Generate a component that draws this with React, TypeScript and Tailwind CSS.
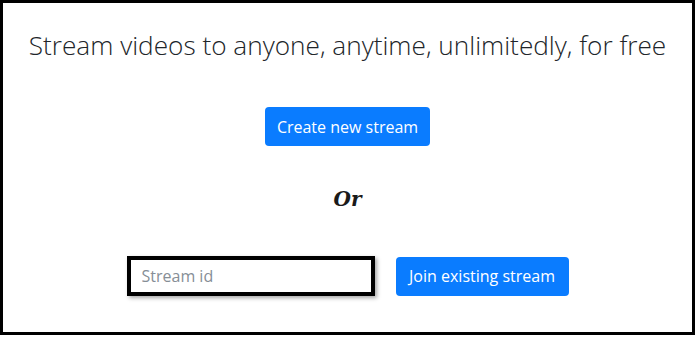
export default function App() {
  return (
    <div className="h-[337px] w-[696px] bg-white p-0">
      <div className="flex h-[335px] w-[695px] flex-col items-center border-[3px] border-black font-['Open_Sans',sans-serif]">
        <h1 className="mt-[25px] whitespace-nowrap text-[26.2px] font-light leading-[34px] text-[#212529]">
          Stream videos to anyone, anytime, unlimitedly, for free
        </h1>
        <button className="mt-[45px] flex h-[39px] w-[165px] items-center justify-center rounded-[4px] bg-[#0a7cff] text-[16px] text-white">
          Create new stream
        </button>
        <div className="mt-[41px] font-['DejaVu_Serif',serif] text-[20px] font-bold italic leading-[24px] text-[#1a1a1a]">
          Or
        </div>
        <div className="mt-[45px] flex items-center gap-[21px]">
          <input
            placeholder="Stream id"
            className="h-[40px] w-[248px] border-[4px] border-black px-[11px] text-[16px] text-[#495057] shadow-[2px_2px_4px_rgba(0,0,0,0.35)] outline-none placeholder:text-[#868e96]"
          />
          <button className="flex h-[39px] w-[173px] items-center justify-center rounded-[4px] bg-[#0a7cff] text-[16px] text-white">
            Join existing stream
          </button>
        </div>
      </div>
    </div>
  );
}
